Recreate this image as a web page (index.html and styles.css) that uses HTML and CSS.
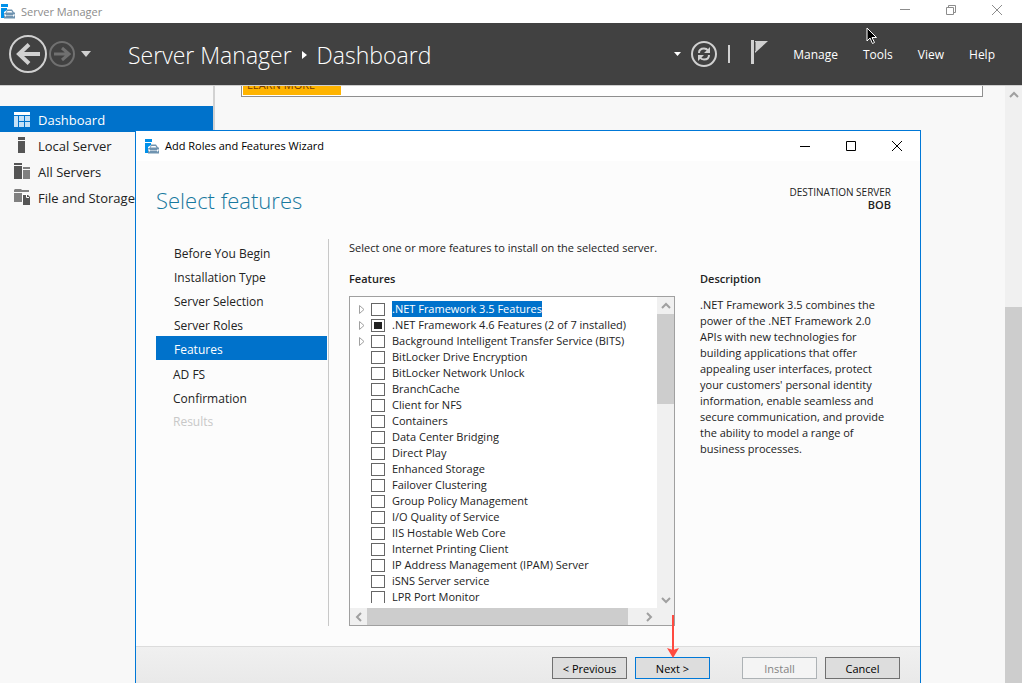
FILE: index.html
```
<!DOCTYPE html>
<html lang="en">
<head>
    <meta charset="UTF-8">
    <meta name="viewport" content="width=device-width, initial-scale=1.0">
    <title>Server Manager</title>
    <link rel="stylesheet" href="styles.css">
</head>
<body>
    <div class="titlebar">
        <svg class="app-icon" width="15" height="15" viewBox="0 0 15 15">
            <path fill="#0091ea" d="M1 0h7v3H1zM1 4h6v2l-3 2v6H1z"/>
            <path fill="#6f93b0" d="M7 5.500h5l2 3h1v6H4v-5l2-1z"/>
            <path fill="#fff" d="M7.500 7h4l1 1.500h-6zM4 10.500h2v1h7v-1h2v1h-1v1h-1v-.5H6v.5H5v-1H4z"/>
        </svg>
        <span class="titlebar-text">Server Manager</span>
        <div class="window-buttons">
            <button type="button" aria-label="Minimize"><svg width="10" height="10" viewBox="0 0 10 10"><path d="M0 4.500h10"/></svg></button>
            <button type="button" aria-label="Restore"><svg width="10" height="10" viewBox="0 0 10 10"><path d="M.5 2.500h7v7h-7zM2.500 2.500v-2h7v7h-2"/></svg></button>
            <button type="button" aria-label="Close"><svg width="10" height="10" viewBox="0 0 10 10"><path d="M0 0l10 10M10 0L0 10"/></svg></button>
        </div>
    </div>

    <header class="header">
        <button type="button" class="nav-button" aria-label="Back">
            <svg width="38" height="38" viewBox="0 0 38 38" fill="none" stroke="#d0d0d0">
                <circle cx="19" cy="19" r="18" stroke-width="2"/>
                <path d="M9 19h22M20 9.500L10 19l10 9.500" stroke-width="4"/>
            </svg>
        </button>
        <button type="button" class="nav-button" aria-label="Forward">
            <svg width="26" height="26" viewBox="0 0 26 26" fill="none" stroke="#707070">
                <circle cx="13" cy="13" r="12" stroke-width="2"/>
                <path d="M5 13h14M13 7l7 6-7 6" stroke-width="3"/>
            </svg>
        </button>
        <button type="button" class="nav-button history" aria-label="History">
            <svg width="10" height="6" viewBox="0 0 10 6"><path d="M0 0h10L5 6z" fill="#d0d0d0"/></svg>
        </button>
        <h1 class="breadcrumb">
            <span>Server Manager</span>
            <svg width="5" height="8" viewBox="0 0 5 8"><path d="M0 0l5 4-5 4z" fill="#fff"/></svg>
            <span>Dashboard</span>
        </h1>
        <div class="header-tools">
            <button type="button" class="nav-button" aria-label="Refresh options">
                <svg width="7" height="4" viewBox="0 0 7 4"><path d="M0 0h7L3.500 4z" fill="#fff"/></svg>
            </button>
            <button type="button" class="nav-button refresh" aria-label="Refresh">
                <svg width="26" height="26" viewBox="0 0 26 26" fill="none" stroke="#d0d0d0">
                    <circle cx="13" cy="13" r="12" stroke-width="2"/>
                    <path d="M8 12c0-3 2-4.500 5-4.500 2 0 3 .5 4 2M18 14c0 3-2 4.500-5 4.500-2 0-3-.5-4-2" stroke-width="2"/>
                    <path d="M19 6v6h-6zM7 20v-6h6z" fill="#d0d0d0" stroke="none"/>
                </svg>
            </button>
            <span class="separator"></span>
            <button type="button" class="nav-button flag" aria-label="Notifications">
                <svg width="17" height="24" viewBox="0 0 17 24"><path d="M0 0h3v24H0z" fill="#d0d0d0"/><path d="M4 1h13L4 13z" fill="#d0d0d0"/><path d="M4.500 2v9" stroke="#8a8a8a"/></svg>
            </button>
        </div>
        <nav class="menu">
            <a href="#">Manage</a>
            <a href="#">Tools</a>
            <a href="#">View</a>
            <a href="#">Help</a>
        </nav>
        <svg class="cursor" width="12" height="18" viewBox="0 0 12 18"><path d="M1 1v13l3-3 2.500 5.500 2-1L6 10.500h4.500z" fill="#000" stroke="#fff"/></svg>
    </header>

    <div class="workspace">
        <nav class="sidebar">
            <a href="#" class="active">
                <svg width="16" height="15" viewBox="0 0 16 15"><path fill="#fff" d="M0 0h16v3H0z"/><path fill="#c5e1f7" d="M0 4h4v11H0zM5 4h5v5H5zM11 4h5v5h-5zM5 10h5v5H5zM11 10h5v5h-5z"/></svg>
                <span>Dashboard</span>
            </a>
            <a href="#">
                <svg width="16" height="16" viewBox="0 0 16 16"><path fill="#555" d="M4 0h7v3H4zM4 4h7v12H4z"/></svg>
                <span>Local Server</span>
            </a>
            <a href="#">
                <svg width="16" height="16" viewBox="0 0 16 16"><path fill="#555" d="M0 0h8v2H0zM0 3h8v13H0z"/><path fill="#808080" d="M9 4h7v2H9zM9 7h7v9H9z"/></svg>
                <span>All Servers</span>
            </a>
            <a href="#">
                <svg width="16" height="16" viewBox="0 0 16 16"><path fill="#808080" d="M1 0h6l1 1h7v2H0V1zM0 4h8v9H0z"/><path fill="#555" d="M9 6h5l2 2v8H9z"/><path stroke="#fff" fill="none" d="M8.500 13V5.500h5M12.500 6v2.500H15"/></svg>
                <span>File and Storage</span>
            </a>
        </nav>
        <main class="content">
            <div class="welcome-tile"><button type="button" class="learn-more">LEARN MORE</button></div>
        </main>
        <div class="scrollbar page-scroll">
            <svg width="17" height="17" viewBox="0 0 17 17"><path d="M5 11l4-4 4 4"/></svg>
            <div class="thumb"></div>
        </div>
    </div>

    <section class="wizard" role="dialog" aria-label="Add Roles and Features Wizard">
        <div class="wizard-titlebar">
            <svg class="app-icon" width="15" height="15" viewBox="0 0 15 15">
                <path fill="#0091ea" d="M1 0h7v3H1zM1 4h6v2l-3 2v6H1z"/>
                <path fill="#6f93b0" d="M7 5.500h5l2 3h1v6H4v-5l2-1z"/>
                <path fill="#fff" d="M7.500 7h4l1 1.500h-6zM4 10.500h2v1h7v-1h2v1h-1v1h-1v-.5H6v.5H5v-1H4z"/>
            </svg>
            <span class="titlebar-text">Add Roles and Features Wizard</span>
            <div class="window-buttons">
                <button type="button" aria-label="Minimize"><svg width="10" height="10" viewBox="0 0 10 10"><path d="M0 5.500h10"/></svg></button>
                <button type="button" aria-label="Maximize"><svg width="10" height="10" viewBox="0 0 10 10"><path d="M.5.5h9v9h-9z"/></svg></button>
                <button type="button" aria-label="Close"><svg width="10" height="10" viewBox="0 0 10 10"><path d="M0 0l10 10M10 0L0 10"/></svg></button>
            </div>
        </div>

        <div class="wizard-header">
            <h2>Select features</h2>
            <div class="destination">DESTINATION SERVER<strong>BOB</strong></div>
        </div>

        <div class="wizard-body">
            <nav class="steps">
                <a href="#">Before You Begin</a>
                <a href="#">Installation Type</a>
                <a href="#">Server Selection</a>
                <a href="#">Server Roles</a>
                <a href="#" class="current">Features</a>
                <a href="#" class="next-step">AD FS</a>
                <a href="#" class="next-step">Confirmation</a>
                <a class="next-step disabled">Results</a>
            </nav>

            <div class="step-content">
                <p class="intro">Select one or more features to install on the selected server.</p>
                <div class="columns">
                    <div class="features">
                        <h3>Features</h3>
                        <div class="tree">
                            <ul class="feature-list" id="featureList"></ul>
                            <div class="scrollbar tree-vertical">
                                <svg width="17" height="17" viewBox="0 0 17 17"><path d="M5 11l4-4 4 4"/></svg>
                                <div class="thumb"></div>
                                <svg width="17" height="17" viewBox="0 0 17 17"><path d="M5 7l4 4 4-4"/></svg>
                            </div>
                            <div class="scrollbar tree-horizontal">
                                <svg width="17" height="17" viewBox="0 0 17 17"><path d="M11 5L7 9l4 4"/></svg>
                                <div class="thumb"></div>
                                <svg width="17" height="17" viewBox="0 0 17 17"><path d="M7 5l4 4-4 4"/></svg>
                            </div>
                        </div>
                    </div>
                    <div class="description">
                        <h3>Description</h3>
                        <p>.NET Framework 3.5 combines the power of the .NET Framework 2.0 APIs with new technologies for building applications that offer appealing user interfaces, protect your customers' personal identity information, enable seamless and secure communication, and provide the ability to model a range of business processes.</p>
                    </div>
                </div>
            </div>
        </div>

        <div class="wizard-footer">
            <button type="button">&lt; Previous</button>
            <button type="button" class="default">Next &gt;
                <svg class="arrow" width="12" height="43" viewBox="0 0 12 43"><path d="M6 0v36" stroke="#ff4a40" stroke-width="2"/><path d="M0 33l6 2 6-2-6 10z" fill="#ff4a40"/></svg>
            </button>
            <button type="button" class="install" disabled>Install</button>
            <button type="button">Cancel</button>
        </div>
    </section>

    <script>
        const features = [
            { name: '.NET Framework 3.5 Features', children: true, selected: true },
            { name: '.NET Framework 4.6 Features (2 of 7 installed)', children: true, partial: true },
            { name: 'Background Intelligent Transfer Service (BITS)', children: true },
            { name: 'BitLocker Drive Encryption' },
            { name: 'BitLocker Network Unlock' },
            { name: 'BranchCache' },
            { name: 'Client for NFS' },
            { name: 'Containers' },
            { name: 'Data Center Bridging' },
            { name: 'Direct Play' },
            { name: 'Enhanced Storage' },
            { name: 'Failover Clustering' },
            { name: 'Group Policy Management' },
            { name: 'I/O Quality of Service' },
            { name: 'IIS Hostable Web Core' },
            { name: 'Internet Printing Client' },
            { name: 'IP Address Management (IPAM) Server' },
            { name: 'iSNS Server service' },
            { name: 'LPR Port Monitor' }
        ];

        const list = document.getElementById('featureList');

        features.forEach((feature, i) => {
            const item = document.createElement('li');
            item.innerHTML = `
                <svg class="expander" width="6" height="9" viewBox="0 0 6 9">${feature.children ? '<path d="M.5.5v8l4.500-4z"/>' : ''}</svg>
                <input type="checkbox" id="feature${i}">
                <label for="feature${i}" class="${feature.selected ? 'selected' : ''}">${feature.name}</label>
            `;
            item.querySelector('input').indeterminate = Boolean(feature.partial);
            list.appendChild(item);
        });
    </script>
</body>
</html>
```

FILE: styles.css
```
* { box-sizing: border-box; }
body { font-family: "Open Sans", "Noto Sans", sans-serif; font-size: 11px; line-height: 16px; color: #222; margin: 0; height: 100vh; display: flex; flex-direction: column; overflow: hidden; position: relative; background: #f8f8f8; }
h1, h2, h3, p, ul { margin: 0; padding: 0; }
a { color: inherit; text-decoration: none; }
button { font: inherit; color: inherit; padding: 0; }
svg { display: block; flex: none; }

/* Main window */
.titlebar { height: 23px; flex: none; background: #fff; color: #8c8c8c; display: flex; align-items: center; padding-right: 20px; }
.titlebar-text { margin-left: 6px; }
.window-buttons { margin-left: auto; display: flex; gap: 36px; }
.titlebar .window-buttons { padding-bottom: 3px; }
.window-buttons button { border: 0; background: none; }
.window-buttons path { fill: none; stroke: currentColor; }
.header { height: 62px; flex: none; background: #414141; color: #fff; display: flex; align-items: center; padding: 0 27px 0 9px; position: relative; }
.nav-button { border: 0; background: none; margin-right: 2px; }
.history { margin-left: 4px; }
.breadcrumb { font-size: 23px; line-height: 32px; font-weight: 300; display: flex; align-items: center; gap: 10px; margin-left: 35px; padding-top: 2px; }
.header-tools { margin-left: auto; display: flex; align-items: center; }
.refresh { margin-left: 8px; }
.separator { width: 2px; height: 18px; background: #d0d0d0; margin-left: 9px; }
.flag { margin: 0 0 4px 21px; }
.menu { display: flex; gap: 25px; margin-left: 25px; padding-top: 2px; font-size: 12px; }
.cursor { position: absolute; right: 144px; top: 4px; }

.workspace { flex: 1; display: flex; min-height: 0; border-top: 1px solid #cfcfcf; }
.sidebar { width: 215px; flex: none; border-right: 2px solid #d2d2d2; padding-top: 20px; font-size: 13px; }
.sidebar a { display: flex; align-items: center; gap: 8px; height: 26px; padding-left: 14px; white-space: nowrap; }
.sidebar span { padding-top: 2px; }
.sidebar .active { background: #0072cb; color: #fff; }
.content { flex: 1; padding: 0 22px 0 26px; }
.welcome-tile { height: 11px; border: 1px solid #8f8f8f; border-top: 0; background: #fff; overflow: hidden; display: flex; align-items: flex-end; padding: 0 1px 1px; }
.learn-more { width: 98px; height: 24px; flex: none; border: 0; background: #ffb400; color: #7a3c00; text-align: left; padding: 4px 4px 0; }

.scrollbar { background: #f0f0f0; display: flex; }
.scrollbar path { fill: none; stroke: #a0a0a0; stroke-width: 2; }
.thumb { background: #cdcdcd; }
.page-scroll { width: 17px; flex-direction: column; }
.page-scroll .thumb { flex: 1; margin-top: 204px; }

/* Wizard window */
.wizard { position: absolute; left: 135px; right: 101px; top: 130px; bottom: -6px; border: 1px solid #0078d7; background: #fcfcfc; display: flex; flex-direction: column; }
.wizard-titlebar { height: 30px; flex: none; background: #fff; color: #000; display: flex; align-items: center; padding: 0 18px 0 8px; }
.wizard-header { height: 78px; flex: none; display: flex; justify-content: space-between; padding: 23px 29px 0 20px; }
.wizard-header h2 { font-size: 22px; line-height: 32px; font-weight: 300; color: #17789e; }
.destination { font-size: 10px; line-height: 12px; text-align: right; padding-top: 2px; }
.destination strong { display: block; font-size: 11px; line-height: 14px; font-weight: 600; }
.wizard-body { flex: 1; min-height: 0; display: flex; padding: 0 30px 20px 20px; }
.steps { width: 173px; flex: none; border-right: 1px solid #c8c8c8; padding: 1px 1px 0 0; font-size: 12px; line-height: 23px; }
.steps a { display: block; height: 24px; padding: 2px 0 0 18px; }
.steps .current { background: #0072cb; color: #fff; margin-bottom: 1px; }
.steps .next-step { padding-left: 17px; }
.steps .disabled { color: #c8c8c8; padding-top: 1px; }
.step-content { flex: 1; min-width: 0; padding: 1px 0 0 20px; display: flex; flex-direction: column; }
.intro { margin-bottom: 15px; }
h3 { font-size: 11px; line-height: 16px; font-weight: 600; }
.columns { flex: 1; min-height: 0; display: flex; gap: 25px; }
.features { flex: 1; min-width: 0; display: flex; flex-direction: column; gap: 9px; }
.description { width: 190px; flex: none; display: flex; flex-direction: column; gap: 10px; }
.tree { flex: 1; min-height: 0; border: 1px solid #a0a0a0; background: #fff; display: grid; grid-template-columns: 1fr 17px; grid-template-rows: 1fr 17px; }
.feature-list { list-style: none; padding-top: 4px; margin-bottom: 5px; overflow: hidden; min-height: 0; }
.feature-list li { display: flex; align-items: center; height: 16px; padding-left: 9px; white-space: nowrap; }
.expander path { fill: none; stroke: #a0a0a0; }
.feature-list input { appearance: none; width: 14px; height: 13px; margin: 0 7px 0 6px; border: 1px solid #666; background: #fff; flex: none; }
.feature-list input:indeterminate { background: #222; border: 1px solid #666; box-shadow: inset 0 0 0 2px #fff; }
.feature-list .selected { background: #0072cb; color: #fff; }
.tree-vertical { flex-direction: column; }
.tree-vertical .thumb { height: 90px; margin-bottom: auto; }
.tree-horizontal { grid-column: 1 / 3; padding-right: 17px; }
.tree-horizontal .thumb { flex: 1; margin-right: 12px; }

.wizard-footer { height: 42px; flex: none; border-top: 1px solid #dcdcdc; background: linear-gradient(#f0f0f0, #e8e8e8); display: flex; justify-content: flex-end; align-items: flex-start; gap: 8px; padding: 10px 20px 0; }
.wizard-footer button { width: 75px; height: 22px; padding-top: 1px; border: 1px solid #707070; background: #ddd; color: #000; position: relative; }
.wizard-footer .default { border-color: #0078d7; }
.wizard-footer .install { margin-left: 24px; border-color: #adb2b5; background: #f4f4f4; color: #838383; }
.arrow { position: absolute; left: 31px; bottom: 20px; }
```
